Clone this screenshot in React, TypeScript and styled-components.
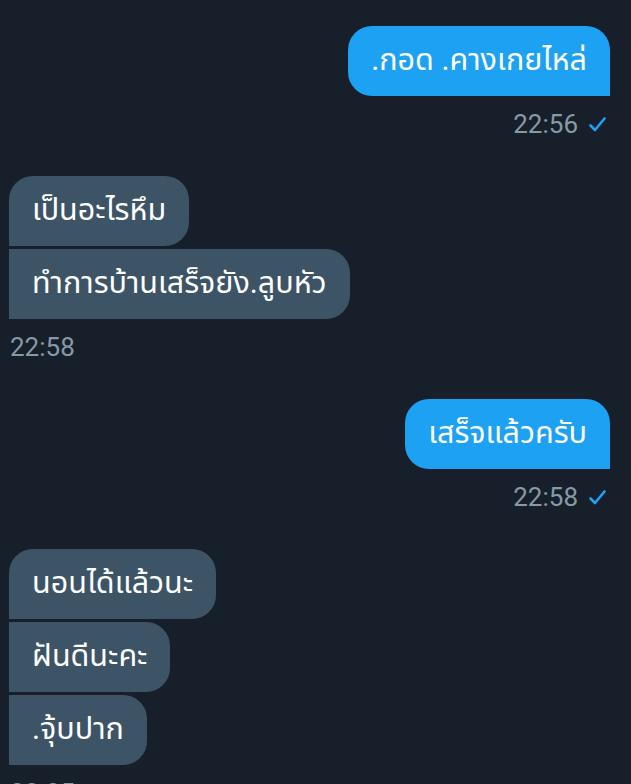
import React from "react";
import styled, { createGlobalStyle } from "styled-components";

const Global = createGlobalStyle`
  html, body { margin: 0; padding: 0; background: #17202a; }
  body { font-family: Roboto, "Noto Sans Thai", "Noto Sans", sans-serif; }
`;

const Page = styled.div`
  width: 631px;
  height: 784px;
  overflow: hidden;
  background: #17202a;
  box-sizing: border-box;
  padding: 26px 21px 0 9px;
  display: flex;
  flex-direction: column;
  gap: 37px;
`;

const Group = styled.div<{ $sent?: boolean }>`
  display: flex;
  flex-direction: column;
  align-items: ${(p) => (p.$sent ? "flex-end" : "flex-start")};
`;

const Bubbles = styled.div<{ $sent?: boolean }>`
  display: flex;
  flex-direction: column;
  gap: 3px;
  align-items: ${(p) => (p.$sent ? "flex-end" : "flex-start")};
`;

const Bubble = styled.div<{ $sent?: boolean; $first?: boolean }>`
  box-sizing: border-box;
  height: 70px;
  display: flex;
  align-items: center;
  padding: 0 23px;
  font-size: 30.5px;
  color: #ffffff;
  white-space: nowrap;
  background: ${(p) => (p.$sent ? "#1da1f2" : "#3d5466")};
  border-radius: ${(p) =>
    p.$sent
      ? "24px 24px 0 24px"
      : p.$first
      ? "24px 24px 24px 0"
      : "0 24px 24px 0"};
`;

const Meta = styled.div<{ $sent?: boolean }>`
  display: flex;
  align-items: center;
  gap: 11px;
  margin-top: 13px;
  height: 30px;
  font-size: 26px;
  color: #8899a6;
  padding-right: ${(p) => (p.$sent ? "4px" : "0")};
  padding-left: ${(p) => (p.$sent ? "0" : "1px")};
`;

const Check = () => (
  <svg width="17" height="15" viewBox="0 0 17 15" fill="none">
    <path d="M1.5 8.5 L6 13 L15.5 1.5" stroke="#1da1f2" strokeWidth="2.6" strokeLinecap="round" strokeLinejoin="round" />
  </svg>
);

type Msg = { sent: boolean; texts: string[]; time: string };

const messages: Msg[] = [
  { sent: true, texts: [".กอด .คางเกยไหล่"], time: "22:56" },
  { sent: false, texts: ["เป็นอะไรหึม", "ทำการบ้านเสร็จยัง.ลูบหัว"], time: "22:58" },
  { sent: true, texts: ["เสร็จแล้วครับ"], time: "22:58" },
  { sent: false, texts: ["นอนได้แล้วนะ", "ฝันดีนะคะ", ".จุ้บปาก"], time: "23:05" },
];

export default function App() {
  return (
    <>
      <Global />
      <Page>
        {messages.map((m, i) => (
          <Group key={i} $sent={m.sent}>
            <Bubbles $sent={m.sent}>
              {m.texts.map((t, j) => (
                <Bubble key={j} $sent={m.sent} $first={j === 0}>
                  {t}
                </Bubble>
              ))}
            </Bubbles>
            <Meta $sent={m.sent}>
              <span>{m.time}</span>
              {m.sent && <Check />}
            </Meta>
          </Group>
        ))}
      </Page>
    </>
  );
}
